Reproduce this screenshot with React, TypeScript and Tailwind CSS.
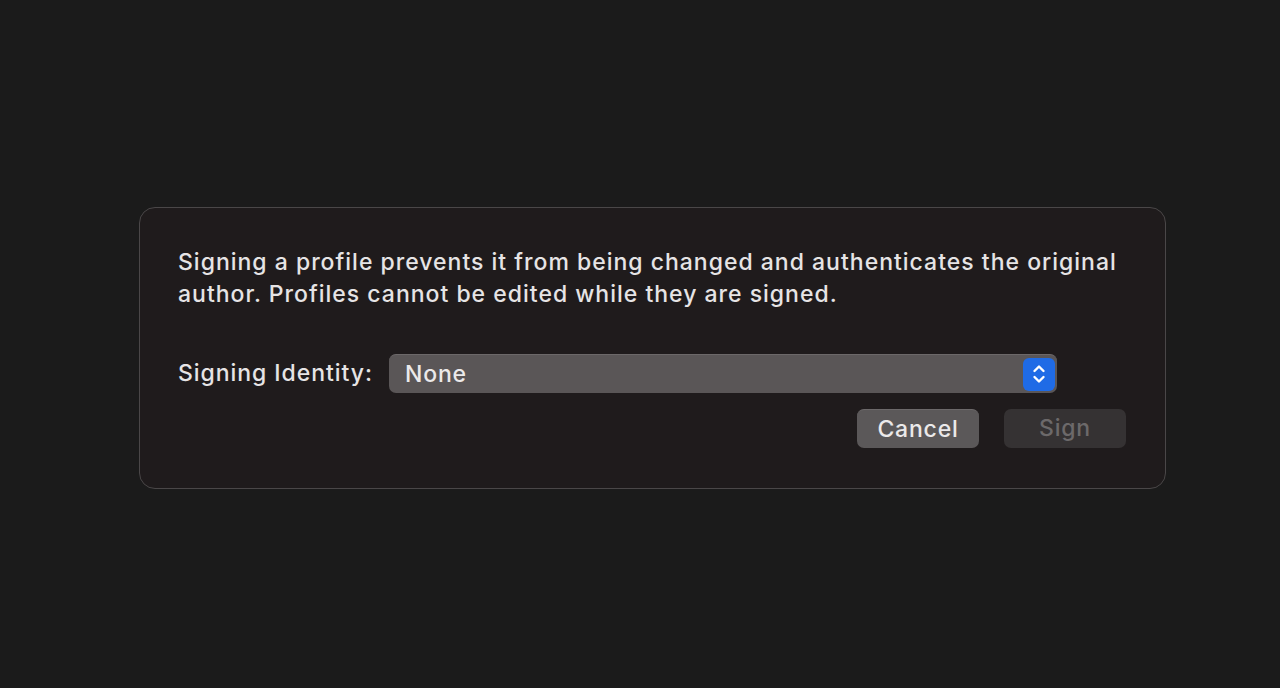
import React from 'react';

export default function App() {
  return (
    <div
      className="min-h-[688px] w-full bg-[#1b1b1b] pt-[207px] pl-[139px]"
      style={{ fontFamily: 'Inter, "Noto Sans", sans-serif' }}
    >
      <div className="w-[1027px] h-[282px] rounded-[16px] border border-[#4a4748] bg-[#1f1b1c] pl-[38px] pr-[39px] pt-[38px] flex flex-col">
        <p className="text-[23px] leading-[32px] font-medium text-[#e6e4e5] tracking-[1px]">
          Signing a profile prevents it from being changed and authenticates the original author. Profiles cannot be edited while they are signed.
        </p>

        <div className="mt-[44px] flex items-center h-[39px]">
          <span className="text-[23px] font-medium text-[#e6e4e5] w-[211px] tracking-[0.95px]">Signing Identity:</span>
          <div className="w-[668px] h-[39px] rounded-[7px] bg-[#5a5657] border-t border-[#6c6869] flex items-center justify-between pl-[16px] pr-[2px]">
            <span className="text-[23px] font-medium tracking-[0.8px] text-[#ebe9ea]">None</span>
            <div className="w-[32px] h-[33px] rounded-[6px] bg-[#1f6be6] flex items-center justify-center">
              <svg width="16" height="24" viewBox="0 0 16 24" fill="none" stroke="white" strokeWidth="2.4" strokeLinecap="round" strokeLinejoin="round">
                <path d="M3.5 9 L8 4.5 L12.5 9" />
                <path d="M3.5 15 L8 19.5 L12.5 15" />
              </svg>
            </div>
          </div>
        </div>

        <div className="mt-[16px] flex justify-end gap-[25px]">
          <button className="w-[122px] h-[39px] rounded-[7px] bg-[#5b5859] border-t border-[#6c696a] text-[23px] font-medium tracking-[0.8px] text-[#ebe9ea]">
            Cancel
          </button>
          <button className="w-[122px] h-[39px] rounded-[7px] bg-[#353233] text-[23px] font-medium tracking-[0.8px] text-[#6c696a]">
            Sign
          </button>
        </div>
      </div>
    </div>
  );
}
